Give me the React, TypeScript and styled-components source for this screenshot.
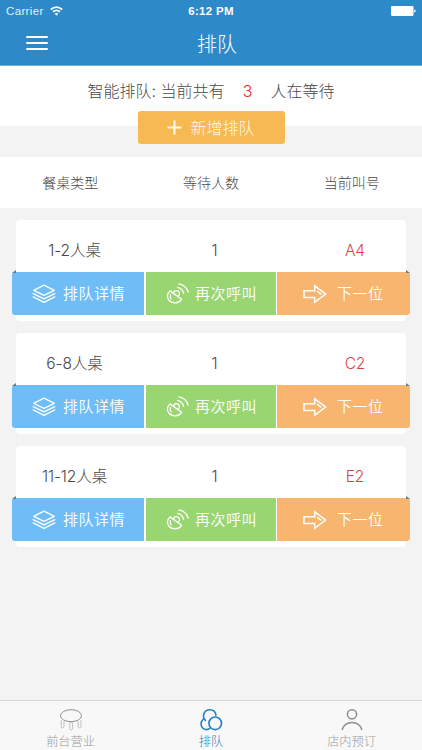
import React from "react";
import styled, { createGlobalStyle } from "styled-components";

const GlobalStyle = createGlobalStyle`
  * { box-sizing: border-box; }
  body { margin: 0; }
  button { border: 0; padding: 0; margin: 0; font: inherit; color: inherit; background: none; }
`;

const Screen = styled.div`
  width: 422px;
  height: 750px;
  display: flex;
  flex-direction: column;
  overflow: hidden;
  background: #f3f3f3;
  color: #484848;
  font-family: Inter, "Noto Sans CJK SC", sans-serif;
  font-weight: 300;
  white-space: nowrap;
`;

const Header = styled.header`
  height: 66px;
  flex: none;
  background: #2d89c7;
  border-bottom: 1px solid #73afd9;
  color: #fff;
`;

const StatusBar = styled.div`
  height: 22px;
  display: grid;
  grid-template-columns: 1fr auto 1fr;
  align-items: center;
  padding: 0 6px 0 6px;
  font: 400 11.5px "Liberation Sans", sans-serif;
`;

const Carrier = styled.div`
  display: flex;
  align-items: center;
  gap: 6px;
  letter-spacing: 0.35px;
  color: #e2f1fb;
`;

const Clock = styled.div`
  font-weight: 700;
  letter-spacing: 0.3px;
`;

const BatterySlot = styled.div`
  display: flex;
  justify-content: flex-end;
`;

const NavBar = styled.div`
  height: 43px;
  display: grid;
  grid-template-columns: 1fr auto 1fr;
  align-items: center;
`;

const MenuButton = styled.button`
  width: 22px;
  height: 16px;
  margin: -2px 0 0 26px;
  display: flex;
  flex-direction: column;
  gap: 4px;
`;

const MenuLine = styled.span`
  width: 22px;
  height: 2px;
  border-radius: 1px;
  background: #fff;
`;

const Title = styled.h1`
  margin: 0;
  padding: 2px 0 0 12px;
  font-size: 20px;
  line-height: 43px;
  font-weight: 300;
`;

const Summary = styled.section`
  height: 60px;
  flex: none;
  background: #fff;
  display: flex;
  flex-direction: column;
  align-items: center;
`;

const SummaryText = styled.p`
  height: 45px;
  flex: none;
  margin: 0;
  padding-top: 1px;
  font-size: 16px;
  line-height: 48px;
  display: flex;
`;

const Count = styled.span`
  width: 46px;
  text-align: center;
  color: #f21f24;
`;

const AddButton = styled.button`
  width: 147px;
  height: 33px;
  flex: none;
  border-radius: 3px;
  background: #f7b952;
  color: #fff8e8;
  display: flex;
  align-items: center;
  justify-content: center;
  gap: 8px;
  font-size: 16px;
  line-height: 34px;
`;

const ColumnHeads = styled.div`
  height: 51px;
  flex: none;
  margin-top: 31px;
  background: #fff;
  display: grid;
  grid-template-columns: repeat(3, 1fr);
  text-align: center;
  font-size: 14px;
  line-height: 51px;
`;

const QueueList = styled.main`
  flex: 1;
  display: flex;
  flex-direction: column;
  gap: 12px;
  padding: 12px 16px 0;
`;

const Card = styled.article`
  height: 101px;
  flex: none;
  background: #fff;
  border-radius: 4px;
`;

const CardValues = styled.div`
  height: 52px;
  display: grid;
  grid-template-columns: 117px 163px 118px;
  text-align: center;
  font-size: 15.5px;
  line-height: 62px;
  letter-spacing: -0.1px;
`;

const TicketNumber = styled.span`
  color: #df3f42;
`;

const Actions = styled.div`
  position: relative;
  width: 398px;
  height: 43px;
  margin-left: -4px;
  display: grid;
  grid-template-columns: 132px 130px 133px;
  gap: 1.5px;
  background: #fff;
  border-radius: 3px;

  &::before, &::after {
    content: "";
    position: absolute;
    top: -2px;
    width: 4px;
    height: 3px;
    background: #6e7a82;
  }
  &::before { left: 0; clip-path: polygon(100% 0, 100% 100%, 0 100%); }
  &::after { right: 0; clip-path: polygon(0 0, 100% 100%, 0 100%); }
`;

const Action = styled.button<{ $color: string; $inset: number; $gap: number; $shape?: string }>`
  display: flex;
  align-items: center;
  padding-left: ${(p) => p.$inset}px;
  gap: ${(p) => p.$gap}px;
  background: ${(p) => p.$color};
  border-radius: ${(p) => p.$shape ?? "0"};
  color: #fff;
  font-size: 15px;
  line-height: 43px;
  letter-spacing: 0.5px;
  font-weight: 350;
  svg { flex: none; }
`;

const TabBar = styled.nav`
  height: 50px;
  flex: none;
  background: #f8f8f8;
  border-top: 1px solid #d6d6d6;
  display: grid;
  grid-template-columns: 141px 140px 141px;
`;

const Tab = styled.button<{ $active?: boolean }>`
  display: flex;
  flex-direction: column;
  align-items: center;
  padding-top: 7px;
  color: ${(p) => (p.$active ? "#2480c2" : "#999")};
  font-size: 12.2px;
  line-height: 21px;
  svg { flex: none; }
`;

const WifiIcon = () => (
  <svg width="13" height="10" viewBox="0 0 12 9" fill="none" stroke="#fff" strokeWidth="1.6">
    <path d="M.7 3.1Q6-1.3 11.3 3.1M2.8 5.2Q6 2.7 9.2 5.2" />
    <path d="M6 8.8 4.2 6.9Q6 5.6 7.8 6.9Z" fill="#fff" stroke="none" />
  </svg>
);

const BatteryIcon = () => (
  <svg width="25" height="10" viewBox="0 0 25 10" fill="#fff">
    <rect width="22.5" height="10" rx="1.2" />
    <path d="M23.2 3.4q1.5.3 1.5 1.6t-1.5 1.6z" />
  </svg>
);

const PlusIcon = () => (
  <svg width="15" height="15" viewBox="0 0 15 15" fill="none" stroke="#fffaf0" strokeWidth="2">
    <path d="M7.5.5v14M.5 7.5h14" />
  </svg>
);

const LayersIcon = () => (
  <svg width="24" height="20" viewBox="0 0 24 20" fill="none" stroke="#fff" strokeWidth="1.35" strokeLinejoin="round" strokeLinecap="round">
    <path d="M12 1.2 22.3 6.3 12 11.4 1.7 6.3Z" />
    <path d="m1.2 9.6 10.8 5.3 10.8-5.3M1.2 12.9 12 18.3l10.8-5.4" />
  </svg>
);

const DishIcon = () => (
  <svg width="24" height="21" viewBox="0 0 24 21" fill="none" stroke="#fff" strokeWidth="1.3" strokeLinecap="round" strokeLinejoin="round">
    <path d="M4 7.9 15.6 16.3C12.8 20.6 6.4 20.9 3.2 17.5.5 14.6.9 10.5 4 7.9Z" />
    <path d="M4.4 11.7q-.8 2.4.7 4" />
    <path d="M7.6 10.2Q8 7.7 10.1 7.6q2.8-.1 3.3 2.3.5 2.1-1.3 3.3" />
    <path d="M11.6 4.3q4.8.9 6.1 6.1M12.9.9q7.3 1.3 9.3 8.3" />
  </svg>
);

const NextIcon = () => (
  <svg width="24" height="20" viewBox="0 0 24 20" fill="none" stroke="#fff" strokeWidth="1.5">
    <path d="M11.7 13.5H1V6.7h10.7V1.8L22.6 10 11.7 18.3Z" />
    <path d="m14 7.1 4.3 3.2" />
  </svg>
);

const TableIcon = () => (
  <svg width="24" height="23" viewBox="0 0 24 23" fill="none" stroke="#909090">
    <ellipse cx="12" cy="7.7" rx="10.5" ry="6" />
    <g stroke="#b9b9b9" strokeWidth=".9">
      <path d="M2.2 12.2v6.2q0 1.5 1.4 1.5T5 18.4v-5M10.8 14.8v5.6q0 1.5 1.4 1.5t1.4-1.5v-5.6q-1.4-1-2.8 0M19.2 13.4v5q0 1.5 1.4 1.5t1.4-1.5v-6.2" />
    </g>
  </svg>
);

const CirclesIcon = () => (
  <svg width="24" height="23" viewBox="0 0 24 23" fill="none" stroke="#2480c2" strokeWidth="1.6" strokeLinecap="round">
    <path d="M6.4 12.4C2.5 8.4 5 1.7 10.8 1.7c3.5 0 5.8 2.3 6.2 5.6" />
    <path d="M4.8 10.9c-4.3 3-3.4 10.3 2.5 10.7 1.5 0 2.6-.5 3.5-1.2" />
    <circle cx="16.2" cy="15.3" r="6.3" />
  </svg>
);

const PersonIcon = () => (
  <svg width="24" height="23" viewBox="0 0 24 23" fill="none" stroke="#8f8f8f" strokeWidth="1.5">
    <circle cx="12" cy="6.3" r="4.6" />
    <path d="M2 22Q4.4 14.6 12 14.6T22 22" />
  </svg>
);

const queues = [
  { table: "1-2人桌", waiting: 1, ticket: "A4" },
  { table: "6-8人桌", waiting: 1, ticket: "C2" },
  { table: "11-12人桌", waiting: 1, ticket: "E2" },
];

const QueueCard = ({ table, waiting, ticket }: (typeof queues)[number]) => (
  <Card>
    <CardValues>
      <span>{table}</span>
      <span>{waiting}</span>
      <TicketNumber>{ticket}</TicketNumber>
    </CardValues>
    <Actions>
      <Action $color="#6ebdf6" $inset={20} $gap={7} $shape="3px 0 0 3px">
        <LayersIcon />排队详情
      </Action>
      <Action $color="#99d571" $inset={20.5} $gap={5}>
        <DishIcon />再次呼叫
      </Action>
      <Action $color="#f8b570" $inset={26} $gap={10} $shape="0 3px 3px 0">
        <NextIcon />下一位
      </Action>
    </Actions>
  </Card>
);

export default function App() {
  return (
    <>
      <GlobalStyle />
      <Screen>
        <Header>
          <StatusBar>
            <Carrier>Carrier <WifiIcon /></Carrier>
            <Clock>6:12 PM</Clock>
            <BatterySlot><BatteryIcon /></BatterySlot>
          </StatusBar>
          <NavBar>
            <MenuButton aria-label="菜单"><MenuLine /><MenuLine /><MenuLine /></MenuButton>
            <Title>排队</Title>
          </NavBar>
        </Header>
        <Summary>
          <SummaryText>
            <span>智能排队: 当前共有</span><Count>3</Count><span>人在等待</span>
          </SummaryText>
          <AddButton><PlusIcon />新增排队</AddButton>
        </Summary>
        <ColumnHeads>
          <span>餐桌类型</span><span>等待人数</span><span>当前叫号</span>
        </ColumnHeads>
        <QueueList>
          {queues.map((queue) => <QueueCard key={queue.table} {...queue} />)}
        </QueueList>
        <TabBar>
          <Tab><TableIcon />前台营业</Tab>
          <Tab $active><CirclesIcon />排队</Tab>
          <Tab><PersonIcon />店内预订</Tab>
        </TabBar>
      </Screen>
    </>
  );
}
